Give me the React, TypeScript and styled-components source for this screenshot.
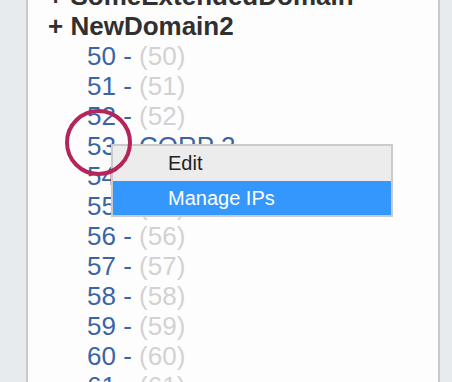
import React from 'react'
import styled, { createGlobalStyle } from 'styled-components'

const GlobalStyle = createGlobalStyle`
    html, body {
        margin: 0;
        padding: 0;
        background: #e8ebee;
        font-family: "Liberation Sans", Arial, sans-serif;
    }
`

interface Child {
    id: number
    name?: string
}

interface Domain {
    name: string
    children: Child[]
}

const domains: Domain[] = [
    { name: 'SomeExtendedDomain', children: [] },
    {
        name: 'NewDomain2',
        children: [50, 51, 52, 53, 54, 55, 56, 57, 58, 59, 60, 61].map(
            (id) => (id === 53 ? { id, name: 'CORP 2' } : { id }),
        ),
    },
]

const Page = styled.div`
    height: 382px;
    padding-left: 26px;
    display: flex;
    overflow: hidden;
`

const Panel = styled.div`
    position: relative;
    width: 410px;
    height: 382px;
    background: #fdfdfd;
    border-left: 2px solid #c9c9c9;
    border-right: 2px solid #c9c9c9;
    overflow: hidden;
`

const Tree = styled.ul`
    list-style: none;
    margin: -19px 0 0 0;
    padding: 0 0 0 20px;
    font-size: 26px;
    line-height: 30px;
`

const DomainRow = styled.li`
    font-weight: bold;
    color: #303030;
    white-space: nowrap;
`

const ChildList = styled.ul`
    list-style: none;
    margin: 0;
    padding: 0 0 0 39px;
    font-weight: normal;
`

const ChildRow = styled.li`
    color: #3b64a6;
    white-space: nowrap;
`

const Muted = styled.span`
    color: #d2d2d2;
`

const Menu = styled.div`
    position: absolute;
    left: 83px;
    top: 144px;
    width: 278px;
    border: 2px solid #cbcbcb;
    background: #ececec;
    font-size: 20px;
    display: flex;
    flex-direction: column;
`

const MenuItem = styled.div<{ active?: boolean }>`
    height: ${(p) => (p.active ? '34px' : '35px')};
    line-height: ${(p) => (p.active ? '34px' : '35px')};
    padding-left: 55px;
    color: ${(p) => (p.active ? '#ffffff' : '#222222')};
    background: ${(p) => (p.active ? '#3497fd' : '#ececec')};
`

const Highlight = styled.div`
    position: absolute;
    left: 37px;
    top: 109px;
    width: 59px;
    height: 59px;
    border: 4px solid #b3255b;
    border-radius: 50%;
    pointer-events: none;
`

export default function App() {
    return (
        <>
            <GlobalStyle />
            <Page>
                <Panel>
                    <Tree>
                        {domains.map((d) => (
                            <DomainRow key={d.name}>
                                + {d.name}
                                {d.children.length > 0 && (
                                    <ChildList>
                                        {d.children.map((c) => (
                                            <ChildRow key={c.id}>
                                                {c.id} -{' '}
                                                {c.name ? (
                                                    c.name
                                                ) : (
                                                    <Muted>({c.id})</Muted>
                                                )}
                                            </ChildRow>
                                        ))}
                                    </ChildList>
                                )}
                            </DomainRow>
                        ))}
                    </Tree>
                    <Menu>
                        <MenuItem>Edit</MenuItem>
                        <MenuItem active>Manage IPs</MenuItem>
                    </Menu>
                    <Highlight />
                </Panel>
            </Page>
        </>
    )
}
